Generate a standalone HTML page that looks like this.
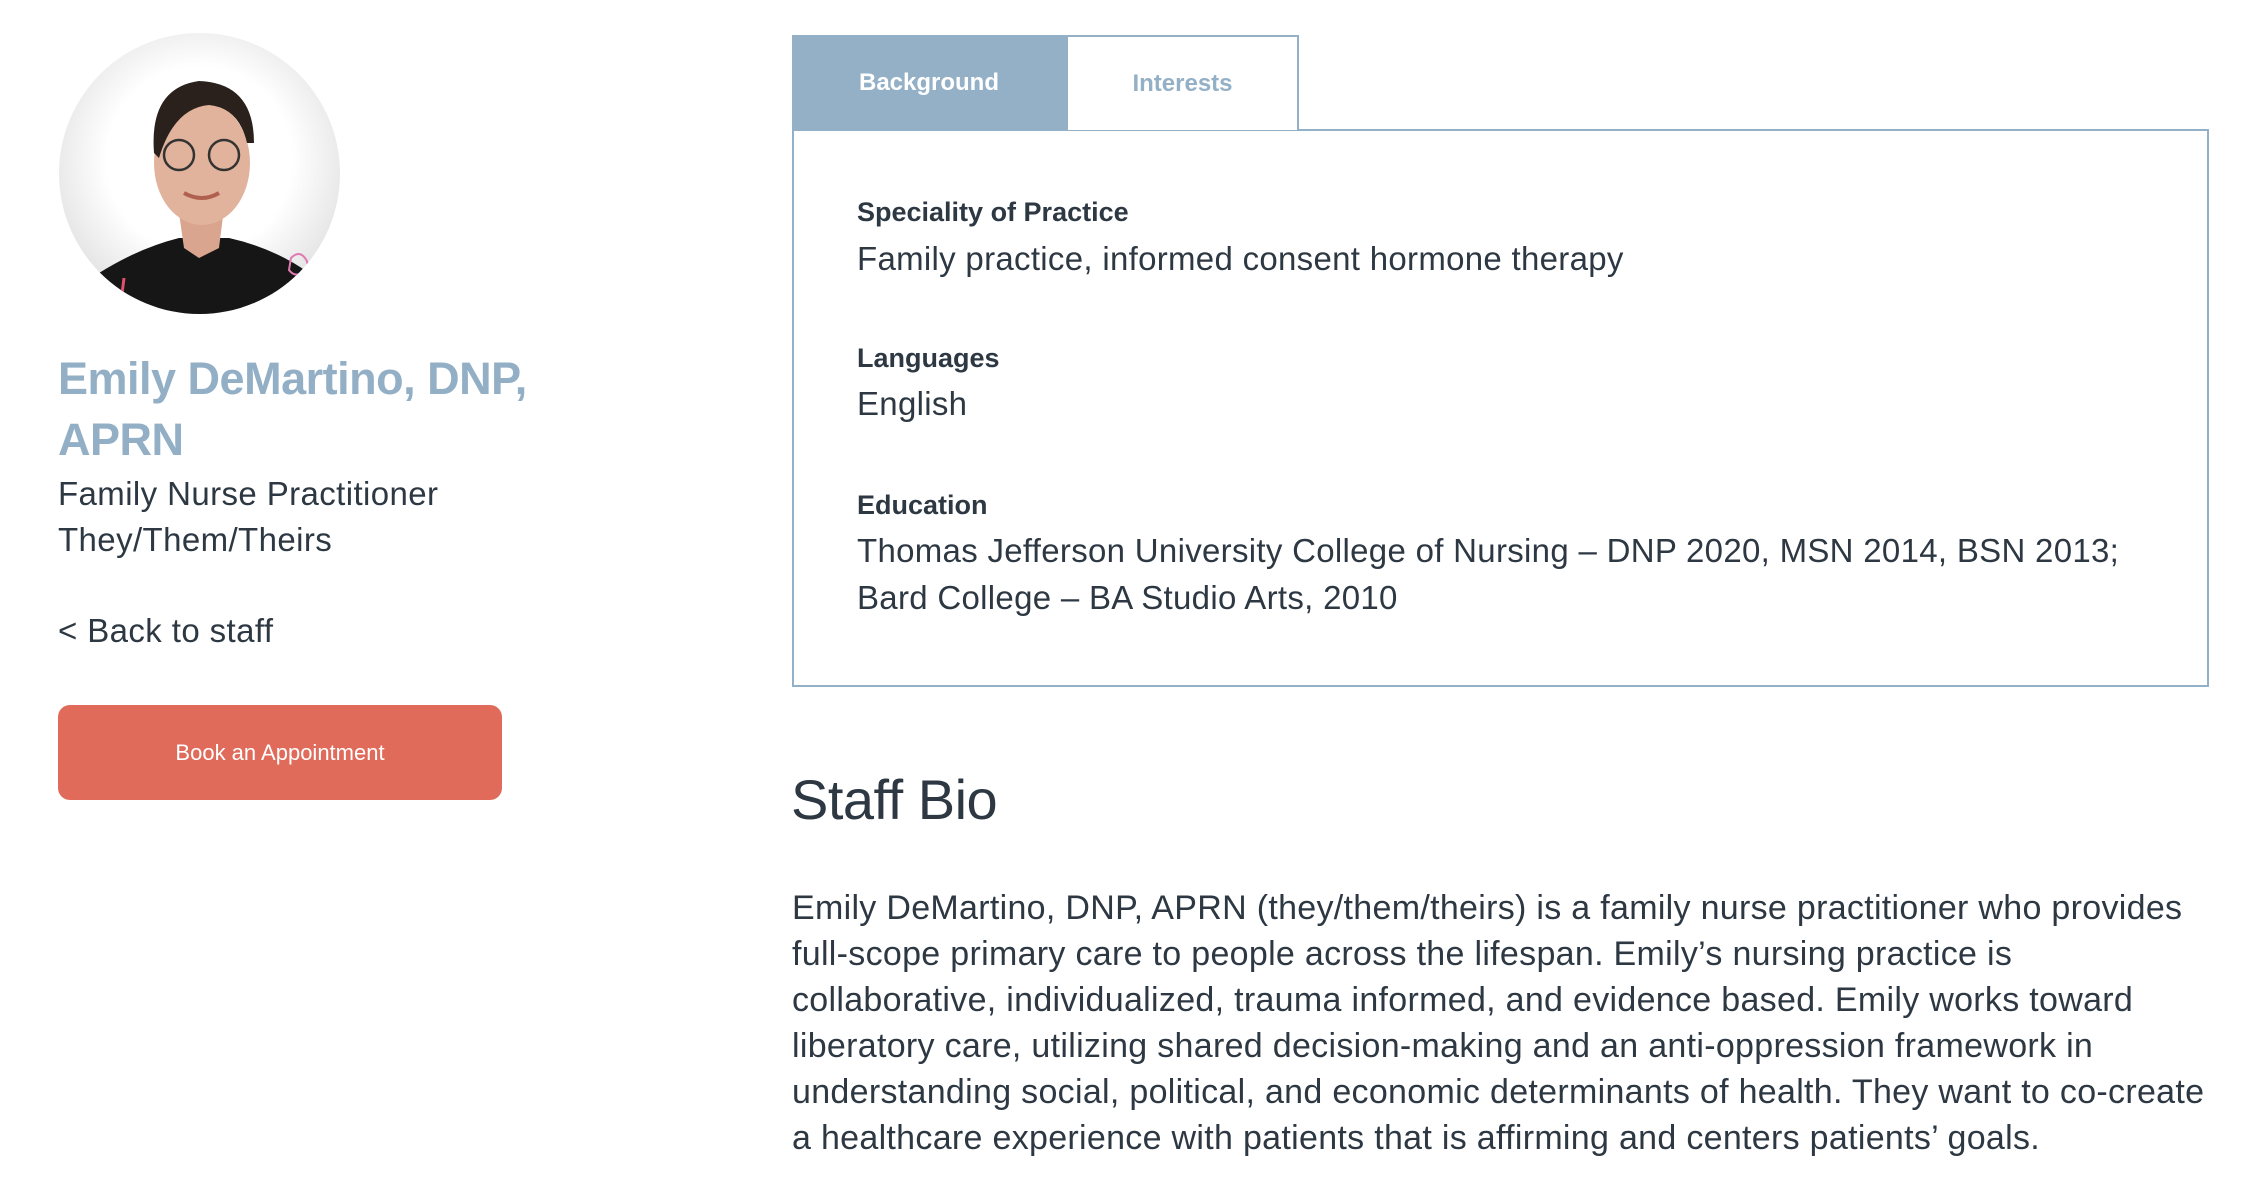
<!DOCTYPE html>
<html><head><meta charset="utf-8"><style>
*{margin:0;padding:0;box-sizing:border-box}
html,body{width:2258px;height:1180px;background:#fff;overflow:hidden;font-family:"Liberation Sans",sans-serif;color:#2d3843}
.abs{position:absolute;white-space:nowrap}
.name{left:58px;font-size:45px;font-weight:bold;color:#93afc6;letter-spacing:-0.5px}
.sub{left:58px;font-size:33px;letter-spacing:0.4px}
.btn{left:58px;top:705px;width:444px;height:95px;background:#e06b5a;border-radius:12px;color:#fff;font-size:22px;display:flex;align-items:center;justify-content:center}
.tab1{left:792px;top:35px;width:274px;height:95px;background:#94b0c6;color:#fff;font-weight:bold;font-size:24px;display:flex;align-items:center;justify-content:center}
.tab2{left:1066px;top:35px;width:233px;height:95px;border:2px solid #94b0c6;border-bottom:none;color:#94b0c6;font-weight:bold;font-size:24px;display:flex;align-items:center;justify-content:center;background:#fff}
.box{left:792px;top:129px;width:1417px;height:558px;border:2px solid #94b0c6}
.lab{left:857px;font-size:27px;font-weight:bold}
.val{left:857px;font-size:33px;letter-spacing:0.3px}
.bio{left:792px;font-size:34px;letter-spacing:0.3px}
</style></head><body>
<svg class="abs" style="left:59px;top:33px" width="281" height="281" viewBox="0 0 281 281">
<defs><radialGradient id="g" cx="50%" cy="45%" r="55%"><stop offset="60%" stop-color="#fff"/><stop offset="100%" stop-color="#e4e4e4"/></radialGradient>
<clipPath id="c"><circle cx="140.5" cy="140.5" r="140.5"/></clipPath></defs>
<g clip-path="url(#c)">
<rect width="281" height="281" fill="url(#g)"/>
<path d="M20 281 L40 240 Q80 215 120 205 L170 205 Q215 215 250 240 L270 281Z" fill="#161616"/>
<path d="M120 180 L125 215 L140 225 L160 215 L165 175Z" fill="#d9a58e"/>
<ellipse cx="143" cy="130" rx="48" ry="62" fill="#e2b39c"/>
<path d="M95 120 Q90 55 140 48 Q195 50 195 110 L188 110 Q180 75 150 72 Q115 75 100 125Z" fill="#2a211c"/>
<circle cx="120" cy="122" r="15" fill="none" stroke="#333" stroke-width="2.5"/>
<circle cx="165" cy="122" r="15" fill="none" stroke="#333" stroke-width="2.5"/>
<path d="M125 160 Q143 170 160 160" stroke="#b0604f" stroke-width="4" fill="none"/>
<path d="M232 225 q8-8 14 0 q6 8-2 14 q-8 6-14-2z" fill="none" stroke="#e07ab0" stroke-width="2"/>
<path d="M60 285 L65 245" stroke="#e05070" stroke-width="3"/>
</g></svg>
<div class="abs name" style="top:353px">Emily DeMartino, DNP,</div>
<div class="abs name" style="top:414px">APRN</div>
<div class="abs sub" style="top:475px">Family Nurse Practitioner</div>
<div class="abs sub" style="top:521px">They/Them/Theirs</div>
<div class="abs sub" style="top:612px">&lt; Back to staff</div>
<div class="abs btn">Book an Appointment</div>

<div class="abs box"></div>
<div class="abs tab1">Background</div>
<div class="abs tab2">Interests</div>
<div class="abs lab" style="top:197px">Speciality of Practice</div>
<div class="abs val" style="top:240px">Family practice, informed consent hormone therapy</div>
<div class="abs lab" style="top:343px">Languages</div>
<div class="abs val" style="top:385px">English</div>
<div class="abs lab" style="top:490px">Education</div>
<div class="abs val" style="top:532px">Thomas Jefferson University College of Nursing – DNP 2020, MSN 2014, BSN 2013;</div>
<div class="abs val" style="top:579px">Bard College – BA Studio Arts, 2010</div>

<div class="abs" style="left:791px;top:767px;font-size:56px;letter-spacing:-0.5px">Staff Bio</div>
<div class="abs bio" style="top:889px">Emily DeMartino, DNP, APRN (they/them/theirs) is a family nurse practitioner who provides</div>
<div class="abs bio" style="top:935px">full-scope primary care to people across the lifespan. Emily’s nursing practice is</div>
<div class="abs bio" style="top:981px">collaborative, individualized, trauma informed, and evidence based. Emily works toward</div>
<div class="abs bio" style="top:1027px">liberatory care, utilizing shared decision-making and an anti-oppression framework in</div>
<div class="abs bio" style="top:1073px">understanding social, political, and economic determinants of health. They want to co-create</div>
<div class="abs bio" style="top:1119px">a healthcare experience with patients that is affirming and centers patients’ goals.</div>
</body></html>
